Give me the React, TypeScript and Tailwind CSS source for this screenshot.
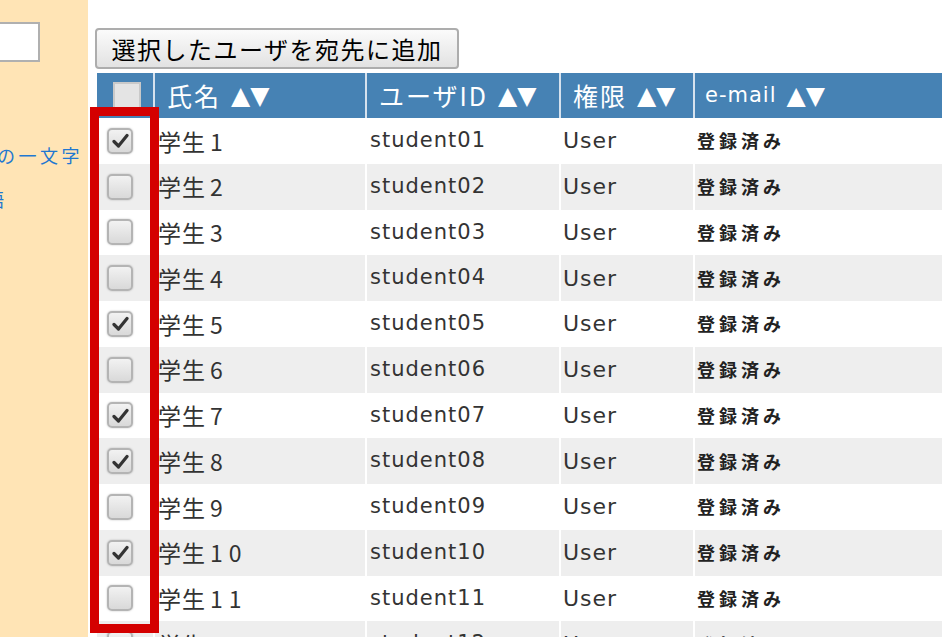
import React from "react";

interface Student {
    no: number;
    userId: string;
    role: string;
    email: string;
    checked: boolean;
}

const checkedNos = [1, 5, 7, 8, 10];

const students: Student[] = Array.from({ length: 12 }, (_, i) => {
    const n = i + 1;
    return {
        no: n,
        userId: `student${String(n).padStart(2, "0")}`,
        role: "User",
        email: "登録済み",
        checked: checkedNos.includes(n),
    };
});

const jp = { fontFamily: '"Noto Sans CJK JP", "Liberation Sans", sans-serif' };
const dejavu = { fontFamily: '"DejaVu Sans", "Noto Sans CJK JP", sans-serif' };

function CheckBox({ checked }: { checked: boolean }) {
    return (
        <div className="w-[26px] h-[26px] rounded-[5px] border-2 border-[#b4b4b4] bg-gradient-to-b from-[#f2f2f2] to-[#d9d9d9] shadow-[0_0_2px_rgba(0,0,0,0.25)] flex items-center justify-center">
            {checked && (
                <svg width="17" height="15" viewBox="0 0 17 15">
                    <path d="M2 8.5 L6.5 13 L15 2.5" fill="none" stroke="#333" strokeWidth="3.2" strokeLinecap="round" strokeLinejoin="round" />
                </svg>
            )}
        </div>
    );
}

function SortArrows() {
    return <span className="ml-[10px] text-[25px] tracking-[0px]" style={dejavu}>▲▼</span>;
}

export default function App() {
    return (
        <div className="flex w-[942px] h-[637px] overflow-hidden bg-white text-[#333]" style={jp}>
            {/* サイドバー */}
            <div className="w-[88px] shrink-0 bg-[#ffe4b5] overflow-hidden">
                <div className="mt-[22px] -ml-[10px] w-[50px] h-[40px] bg-white border-2 border-[#b0b0b0]"></div>
                <div className="mt-[80px] -ml-[46px] whitespace-nowrap text-[18px] tracking-[3.5px] text-[#1f78d1] leading-[26px]">
                    先頭の一文字
                </div>
                <div className="mt-[18px] -ml-[14px] whitespace-nowrap text-[18px] text-[#1f78d1] leading-[26px]">
                    語
                </div>
            </div>

            {/* メイン */}
            <div className="relative flex-1 overflow-hidden">
                <button className="ml-[7px] mt-[28px] w-[364px] h-[41px] rounded-[4px] border-2 border-[#adadad] bg-gradient-to-b from-[#fbfbfb] to-[#e2e2e2] text-[24px] tracking-[1.5px] text-black leading-none">
                    選択したユーザを宛先に追加
                </button>

                <div className="ml-[9px] mt-[4px] w-[900px]">
                    {/* ヘッダー */}
                    <div className="flex h-[45px] bg-[#4682b4] text-white text-[25px] tracking-[2px] leading-none">
                        <div className="w-[58px] border-r-2 border-[#d6e2ee] flex items-center justify-center">
                            <div className="w-[28px] h-[28px] bg-[#e4e4e4] border-2 border-[#c9c9c9] ml-[3px]"></div>
                        </div>
                        <div className="w-[212px] border-r-2 border-[#d6e2ee] flex items-center pl-[12px]">
                            氏名<SortArrows />
                        </div>
                        <div className="w-[194px] border-r-2 border-[#d6e2ee] flex items-center pl-[12px]">
                            ユーザID<SortArrows />
                        </div>
                        <div className="w-[134px] border-r-2 border-[#d6e2ee] flex items-center pl-[12px]">
                            権限<SortArrows />
                        </div>
                        <div className="flex-1 flex items-center pl-[10px] text-[21px] tracking-[1px]" style={dejavu}>
                            e-mail<SortArrows />
                        </div>
                    </div>

                    {/* 行 */}
                    {students.map((s, i) => (
                        <div
                            key={s.userId}
                            className={"flex h-[45.75px] " + (i % 2 === 1 ? "bg-[#eeeeee]" : "bg-white")}
                        >
                            <div className="w-[58px] border-r-2 border-white flex items-center pl-[10px]">
                                <CheckBox checked={s.checked} />
                            </div>
                            <div className="w-[212px] border-r-2 border-white flex items-center pl-[3px] text-[23px] tracking-[1px]">
                                学生<span className="ml-[4px] tracking-[6px]">{s.no}</span>
                            </div>
                            <div className="w-[194px] border-r-2 border-white flex items-center pl-[3px] text-[21px] tracking-[1px]" style={dejavu}>
                                {s.userId}
                            </div>
                            <div className="w-[134px] border-r-2 border-white flex items-center pl-[2px] text-[22px] tracking-[1px]" style={dejavu}>
                                {s.role}
                            </div>
                            <div className="flex-1 flex items-center pl-[2px] text-[18px] tracking-[4px] font-semibold text-[#222]">
                                {s.email}
                            </div>
                        </div>
                    ))}
                </div>

                {/* 注釈の赤枠 */}
                <div className="absolute left-[2px] top-[107px] w-[69px] h-[526px] border-[9px] border-[#d40000]"></div>
            </div>
        </div>
    );
}
